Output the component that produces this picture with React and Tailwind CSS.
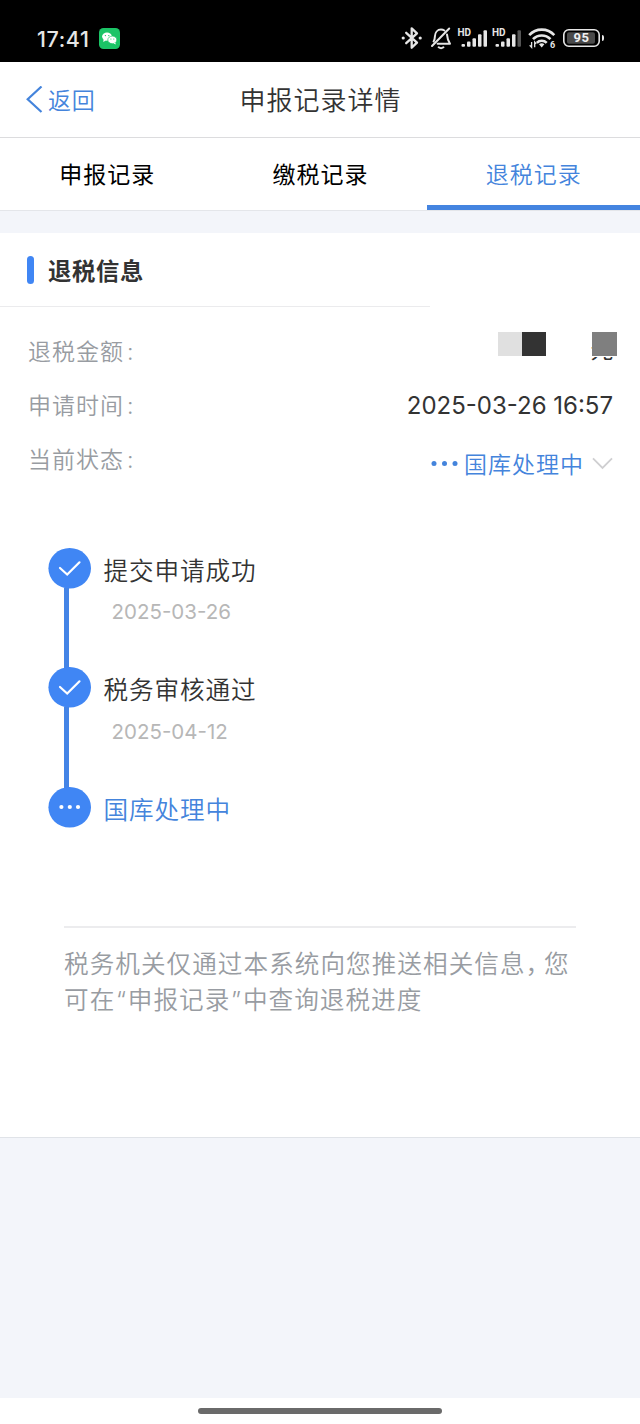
const tabs = [
  { label: '申报记录', active: false },
  { label: '缴税记录', active: false },
  { label: '退税记录', active: true },
];

const steps = [
  { title: '提交申请成功', date: '2025-03-26', done: true },
  { title: '税务审核通过', date: '2025-04-12', done: true },
  { title: '国库处理中', date: '', done: false },
];

function WeChatIcon() {
  return (
    <svg className="ml-[9px] size-[21px]" viewBox="0 0 21 21">
      <rect width="21" height="21" rx="4.5" fill="#1bc466" />
      <ellipse cx="8" cy="8.6" rx="4.9" ry="4.1" fill="#fff" />
      <path d="M4.6 11.2 4.3 14l2.6-1.5z" fill="#fff" />
      <ellipse cx="13.3" cy="11.9" rx="4.5" ry="3.8" fill="#fff" stroke="#1bc466" strokeWidth="0.7" />
      <path d="m14.4 15.3 2.3 1.2-.4-2.2z" fill="#fff" />
      <g fill="#1bc466">
        <circle cx="6.4" cy="7.6" r=".7" />
        <circle cx="9.8" cy="7.6" r=".7" />
        <circle cx="11.9" cy="11" r=".6" />
        <circle cx="14.8" cy="11" r=".6" />
      </g>
    </svg>
  );
}

function BluetoothIcon() {
  return (
    <svg className="w-[22px] h-[24px]" viewBox="0 0 22 24" fill="none" stroke="#e6e6e6" strokeWidth="2.3" strokeLinejoin="round" strokeLinecap="round">
      <path d="M5.200 6.800 16 16.700 10.700 21.700V2.300L16 7.300 5.200 17.200" />
      <circle cx="2.200" cy="12" r="1.600" fill="#e6e6e6" stroke="none" />
      <circle cx="19.200" cy="12" r="1.600" fill="#e6e6e6" stroke="none" />
    </svg>
  );
}

function MutedBellIcon() {
  return (
    <svg className="ml-[7px] w-[22px] h-[24px]" viewBox="0 0 22 24" fill="none" stroke="#e6e6e6" strokeWidth="2" strokeLinejoin="round" strokeLinecap="round">
      <path d="M19.200 2.500 2 20" />
      <path d="M3.600 15.500c1-1.500 1.200-2.700 1.300-5C5 6.500 7.500 3.600 11 3.600c1.300 0 2.400.3 3.400.9" />
      <path d="M17 8.600c.3 3.800.5 5.400 3 9.100H7.600" />
      <path d="M8.700 21.300c1.400 1.100 3.300 1.100 4.700 0" />
    </svg>
  );
}

function Signal({ weak }) {
  return (
    <div className="relative ml-[5.500px] w-[29px] h-[24px]">
      <span className="absolute left-0 top-[2px] font-['Roboto',sans-serif] text-[10px] leading-[9px] font-bold text-[#e6e6e6]">HD</span>
      <svg className="w-[29px] h-[24px]" viewBox="0 0 29 24" fill="#e6e6e6">
        <rect x="3.500" y="18" width="3.500" height="2.800" rx="1" />
        <rect x="9" y="15.500" width="3.500" height="5.300" rx="1" />
        <rect x="14.500" y="12.300" width="3.500" height="8.500" rx="1" />
        <rect x="20" y="8.300" width="3.500" height="12.500" rx="1" />
        <rect x="25.500" y="4.300" width="3.500" height="16.500" rx="1" fill={weak ? '#555' : '#e6e6e6'} />
      </svg>
    </div>
  );
}

function WifiIcon() {
  return (
    <div className="relative ml-[7px] w-[28px] h-[24px]">
      <svg className="w-[28px] h-[24px]" viewBox="0 0 28 24" fill="none" stroke="#e6e6e6" strokeWidth="2.600">
        <path d="M1.200 9.200C8 1.800 19.500 1.800 26.300 9.200" />
        <path d="M5 13.200c4.800-5 12.700-5 17.500 0" />
        <path d="M8.800 16.800c2.700-2.800 7.200-2.800 9.900 0" />
        <path d="m11 18.300 2.700 3.200 2.700-3.200c-1.600-1.300-3.800-1.300-5.400 0z" fill="#e6e6e6" stroke="none" />
        <path d="M3.600 16v5.300l-1.900-2M6.700 21.300V16l1.500 1.800" strokeWidth="1.300" />
      </svg>
      <span className="absolute left-[22px] top-[15px] font-['Roboto',sans-serif] text-[9px] leading-[9px] font-bold text-[#e6e6e6]">6</span>
    </div>
  );
}

function Battery() {
  return (
    <div className="ml-[7px] flex items-center gap-[2px]">
      <div className="relative h-[18px] w-[37px]">
        <svg className="h-[18px] w-[37px]" viewBox="0 0 37 18">
          <rect x=".8" y=".8" width="35.400" height="16.400" rx="5" fill="none" stroke="#e6e6e6" strokeWidth="1.600" />
          <rect x="4" y="3.200" width="28" height="11.600" rx="2" fill="#4a4a4a" />
        </svg>
        <span className="absolute inset-0 text-center font-['Roboto',sans-serif] text-[13px] leading-[18px] font-bold tracking-[.5px] text-[#f0f0f0]">95</span>
      </div>
      <div className="h-[6px] w-[2px] rounded-r bg-[#e6e6e6]" />
    </div>
  );
}

function StepMarker({ done }) {
  return (
    <svg className="h-[41px] w-[43px] shrink-0" viewBox="0 0 43 41">
      <ellipse cx="21.700" cy="20.300" rx="21.300" ry="20.300" fill="#4086f4" />
      {done ? (
        <path d="m12 20 7.200 6.500L31.500 14.300" fill="none" stroke="#fff" strokeWidth="2.200" strokeLinecap="round" />
      ) : (
        <g fill="#fff">
          <circle cx="13.400" cy="20" r="2.100" />
          <circle cx="21.800" cy="20" r="2.100" />
          <circle cx="30" cy="20" r="2.100" />
        </g>
      )}
    </svg>
  );
}

function FieldLabel({ children }) {
  return (
    <dt className="-mt-px text-[23px] tracking-[1px] font-[350] text-[#989ca2]">
      {children}
      <span className="ml-[3px] font-['Inter',sans-serif]">:</span>
    </dt>
  );
}

export default function App() {
  return (
    <div className="flex h-[1424px] w-[640px] flex-col overflow-hidden bg-[#f3f5fa] font-['Noto_Sans_CJK_SC',sans-serif] text-[#333]">
      <div className="flex h-[62px] shrink-0 items-center justify-between bg-black pt-[14px] pr-[36px] pl-[37px]">
        <div className="flex items-center">
          <span className="w-[53px] pt-px font-['Inter',sans-serif] text-[21.500px] leading-6 font-medium tracking-[.6px] text-[#e6e6e6]">17:41</span>
          <WeChatIcon />
        </div>
        <div className="flex items-center">
          <BluetoothIcon />
          <MutedBellIcon />
          <Signal />
          <Signal weak />
          <WifiIcon />
          <Battery />
        </div>
      </div>

      <header className="grid h-[76px] shrink-0 grid-cols-3 items-center border-b border-[#dcdcde] bg-white">
        <div className="flex items-center pl-[26px] text-[#4484dc]">
          <svg className="h-[28px] w-[17px]" viewBox="0 0 17 28" fill="none" stroke="currentColor" strokeWidth="2.200">
            <path d="M15.500 .5 1.700 13.200l13.800 12.800" />
          </svg>
          <span className="-mt-px ml-[5px] text-[23px] leading-8 font-[350] tracking-[.8px]">返回</span>
        </div>
        <h1 className="-mt-px pl-[1px] text-center text-[26px] leading-8 font-[350] tracking-[1px] whitespace-nowrap">申报记录详情</h1>
      </header>

      <nav className="grid h-[73px] shrink-0 grid-cols-3 border-b border-[#e4e6ea] bg-white text-center text-[23px] tracking-[1px]">
        {tabs.map((tab) => (
          <div key={tab.label} className={tab.active ? 'border-b-[5px] border-[#4484e0] pt-[19px] pl-px leading-8 font-[350] text-[#4484dc]' : 'pt-[19px] pl-px leading-8 text-black'}>
            {tab.label}
          </div>
        ))}
      </nav>

      <main className="mt-[22px] h-[905px] shrink-0 border-b border-[#e0e3e8] bg-white">
        <div className="flex h-[74px] w-[430px] items-center border-b border-[#ebebed] pl-[27px]">
          <div className="h-[28px] w-[7px] rounded-full bg-[#4086f4]" />
          <h2 className="ml-[14px] text-[23.300px] leading-8 font-bold tracking-[.7px]">退税信息</h2>
        </div>

        <dl className="flex flex-col pt-[18px] pr-[27px] pl-[28px] text-[24px]">
          <div className="flex h-[54px] items-center justify-between">
            <FieldLabel>退税金额</FieldLabel>
            <dd className="-mr-[4px] flex h-full items-start pt-[7px]">
              <span className="h-[24px] w-[24px] bg-[#e0e0e0]" />
              <span className="h-[24px] w-[24px] bg-[#333]" />
              <span className="relative ml-[46px] h-[24px] w-[25px]">
                <span className="absolute top-[2px] -left-[1.500px] text-[23px] leading-[28px]">元</span>
                <span className="absolute inset-x-0 top-0 h-[25px] border-b border-white bg-[#7f7f7f]" />
              </span>
            </dd>
          </div>
          <div className="flex h-[54px] items-center justify-between">
            <FieldLabel>申请时间</FieldLabel>
            <dd className="font-['Inter',sans-serif] text-[24px]">2025-03-26 16:57</dd>
          </div>
          <div className="flex h-[54px] items-center justify-between">
            <FieldLabel>当前状态</FieldLabel>
            <dd className="flex items-center pt-[7px] text-[#4484dc]">
              <svg className="h-[6px] w-[27px]" viewBox="0 0 27 6" fill="currentColor">
                <circle cx="3" cy="2.500" r="2.500" />
                <circle cx="13.500" cy="2.500" r="2.500" />
                <circle cx="24" cy="2.500" r="2.500" />
              </svg>
              <span className="ml-[6px] text-[23px] font-[350] tracking-[1px]">国库处理中</span>
              <svg className="ml-[8px] h-[14px] w-[21px]" viewBox="0 0 21 14" fill="none" stroke="#cfcfd1" strokeWidth="1.800">
                <path d="m1 1.300 9.500 9.700L20 1.300" />
              </svg>
            </dd>
          </div>
        </dl>

        <ol className="mt-[60.500px] ml-[48px]">
          {steps.map((step) => (
            <li key={step.title} className={step.done ? 'flex h-[119.500px]' : 'flex h-[41px]'}>
              <div className="flex w-[43px] shrink-0 flex-col">
                <StepMarker done={step.done} />
                {step.done && <div className="-my-px ml-[16px] w-[5px] flex-1 bg-[#4484e6]" />}
              </div>
              <div className="ml-[12.500px]">
                <div className={step.done ? 'pt-[4px] text-[24.600px] leading-[34px] font-[350] tracking-[.9px]' : 'pt-[4px] text-[24.600px] leading-[34px] font-[350] tracking-[.9px] text-[#4484dc]'}>{step.title}</div>
                {step.date && <div className="mt-[14.500px] ml-[8px] font-['Inter',sans-serif] text-[20.500px] leading-6 text-[#b7b7b7]">{step.date}</div>}
              </div>
            </li>
          ))}
        </ol>

        <p className="mx-[64px] mt-[98.500px] border-t-2 border-[#ececee] pt-[16px] text-[24.600px] leading-[36px] font-[350] tracking-[1.050px] whitespace-nowrap text-[#989ca2]">
          税务机关仅通过本系统向您推送相关信息<span className="mr-[5px] [font-feature-settings:'halt']">，</span>您
          <br />
          可在<span className="inline-block w-[12.500px] text-center font-['Inter',sans-serif]">“</span>申报记录<span className="inline-block w-[12.500px] text-center font-['Inter',sans-serif]">”</span>中查询退税进度
        </p>
      </main>

      <footer className="mt-auto flex h-[26px] shrink-0 justify-center bg-white pt-[10px]">
        <div className="h-[6px] w-[244px] rounded-full bg-[#6a6a6a]" />
      </footer>
    </div>
  );
}
